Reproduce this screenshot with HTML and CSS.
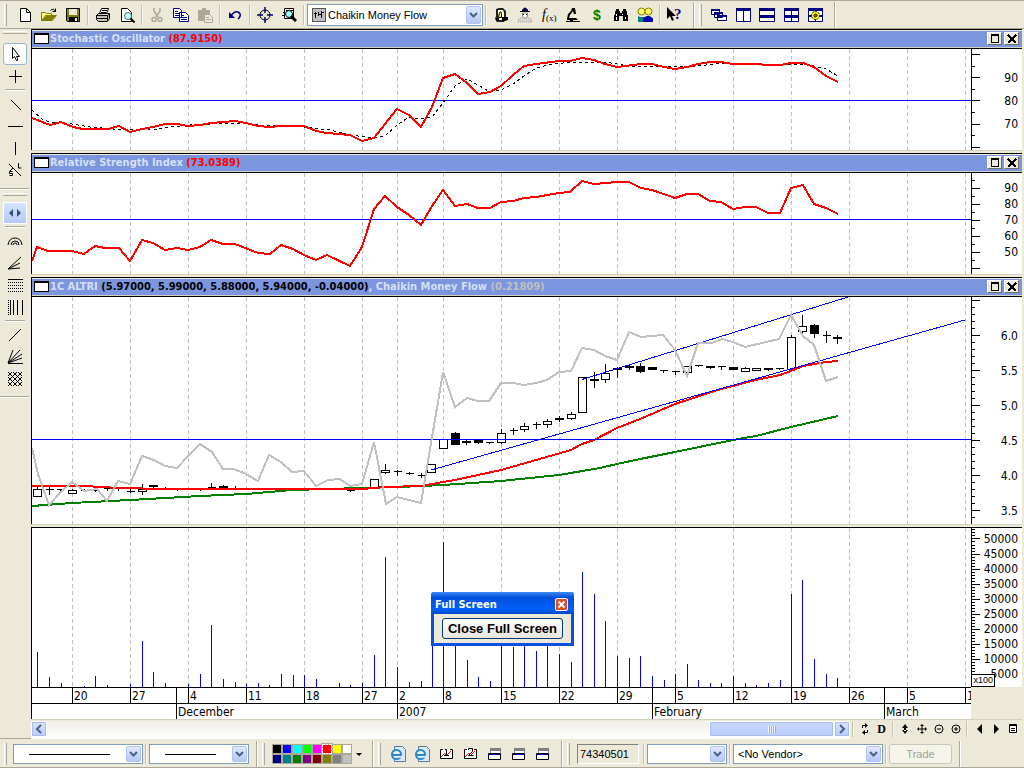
FILE: index.html
```html
<!DOCTYPE html>
<html lang="en">
<head>
<meta charset="utf-8">
<title>1C ALTRI</title>
<link rel="stylesheet" href="styles.css">
</head>
<body>
<header class="toolbar">
  <span class="grip"></span>
  <div class="group group-file">
    <button class="tool" aria-label="New"><svg viewBox="0 0 16 16"><path class="ink fill-white" d="M3.500 1.500h6l4 4v9h-10zM9.500 1.500v4h4"/></svg></button>
    <button class="tool" aria-label="Open"><svg viewBox="0 0 16 16"><path fill="#ffff80" stroke="#808000" d="M.5 13.500v-8h4l1 1h5v2M.500 13.500l4-5h11l-4 5z"/><path fill="#808000" d="M1 13l4-4h10l-4 4z"/><path class="ink" d="M9.500 3.500q3-3 5 1m0-3v3h-3"/></svg></button>
    <button class="tool" aria-label="Save"><svg viewBox="0 0 16 16"><path fill="#808000" stroke="#000" d="M1.500 1.500h13v13h-12l-1-1z"/><path fill="#ece9d8" d="M4 2h8v6H4z"/><path d="M4 10h9v5H4z"/><path fill="#ece9d8" d="M10 11h2v3h-2z"/></svg></button>
  </div>
  <span class="sep"></span>
  <div class="group">
    <button class="tool" aria-label="Print"><svg viewBox="0 0 16 16"><path class="ink fill-white" d="M4.500 6.500l2-5h7l-2 5"/><path class="ink" d="M7 3.500h5M6 5.500h5"/><path fill="#c0c0c0" stroke="#000" d="M1.500 8.500l2-2h11v5l-2 3h-9l-2-2zM1.500 8.500h11l2-2M12.500 8.500v5M2 11.500h10"/><path fill="#ff0" d="M8 12h2v1H8z"/></svg></button>
    <button class="tool" aria-label="Print preview"><svg viewBox="0 0 16 16"><path class="ink fill-white" d="M2.500 14.500v-13h6l4 4v9z"/><circle cx="9" cy="9" r="3.500" fill="#b8ffff" stroke="#606060"/><path stroke="#000" stroke-width="2" d="M11.500 11.500l4 4"/></svg></button>
  </div>
  <span class="sep"></span>
  <div class="group">
    <button class="tool" aria-label="Cut" disabled><svg viewBox="0 0 16 16"><path class="dim" d="M5 1v3l4 6M11 1v3l-4 6"/><circle class="dim" cx="5" cy="12.500" r="2"/><circle class="dim" cx="11" cy="12.500" r="2"/></svg></button>
    <button class="tool" aria-label="Copy"><svg viewBox="0 0 16 16"><path fill="#fff" stroke="#000080" d="M.500 1.500h6l2 2v7h-8zM6.500 5.500h6l3 3v6h-9z"/><path stroke="#000080" d="M2 4.500h3M2 6.500h4M2 8.500h4M8 8.500h3M8 10.500h6M8 12.500h6"/></svg></button>
    <button class="tool" aria-label="Paste" disabled><svg viewBox="0 0 16 16"><path fill="#aca899" d="M1 3h4V1h4v2h4v11H1z"/><path fill="#ece9d8" stroke="#aca899" d="M4 4.500h6M7.500 7.500h5l3 3v5h-8z"/><path stroke="#aca899" d="M9 10.500h3M9 12.500h5"/></svg></button>
  </div>
  <span class="sep"></span>
  <button class="tool" aria-label="Undo"><svg viewBox="0 0 16 16"><path fill="none" stroke="#000080" stroke-width="1.500" d="M4 9q3-5 7-4 4 2 1 6l-1 1"/><path fill="#000080" d="M2 5v6h6z"/></svg></button>
  <span class="sep"></span>
  <button class="tool" aria-label="Crosshair"><svg viewBox="0 0 16 16"><circle cx="8" cy="8" r="5" fill="none" stroke="#000"/><path stroke="#000080" stroke-width="1.500" d="M8 0v6M8 10v6M0 8h6M10 8h6"/></svg></button>
  <button class="tool" aria-label="Explore"><svg viewBox="0 0 16 16"><path class="ink fill-white" d="M3.500 1.500h9v10h-9z"/><path stroke="#000" d="M5 3.500h7M2 5.500h2M1 8.500h3"/><circle cx="8" cy="7" r="3.500" fill="#a0ffff" stroke="#000"/><path stroke="#000" stroke-width="3" d="M10 9l5 5"/></svg></button>
  <span class="sep"></span>
  <div class="combo combo-indicator">
    <svg class="combo-icon" viewBox="0 0 14 14"><path fill="#c0c0c0" stroke="#555" d="M.500.500h13v13H.500z"/><path stroke="#000" d="M3.500 4v6M6.500 4v4M9.500 3v7M2 5.500h3M6 6.500h3M9 4.500h3"/></svg>
    <select aria-label="Indicator"><option>Chaikin Money Flow</option></select>
    <span class="arrow"><svg viewBox="0 0 9 7"><path d="M1 1l3.500 3.500L8 1"/></svg></span>
  </div>
  <span class="sep"></span>
  <div class="group">
    <button class="tool" aria-label="Expert"><svg viewBox="0 0 16 16"><path fill="#222" d="M3 2l3-1h4l3 3v8l-2 3H4l-2-3 1-3z"/><path fill="#fff" d="M5 3h5l1 3v5l-2 2H5z"/><path fill="#ff0" stroke="#000" d="M6.500 5.500q2-2 2 1v4h-3z"/><path d="M3 11h3v3H3zM9 10h6v3l-3 1H9z"/></svg></button>
    <button class="tool" aria-label="Advisor"><svg viewBox="0 0 16 16"><path fill="#0000c0" stroke="#000" d="M5.500 3q2.500-4 5 0v1h-5z"/><path fill="#fff" stroke="#888" d="M5.500 6h5v3l-1.500 2H7L5.500 9z"/><path stroke="#000" d="M3 4.500h10M6 7.500h1M9 7.500h1"/><path fill="#d8d6cc" stroke="#999" stroke-dasharray="1 1" d="M1 15l1-3 4-2 2 2 2-2 4 2 1 3z"/></svg></button>
    <button class="tool" aria-label="Formula"><svg viewBox="0 0 16 16"><text class="glyph glyph-f" x="1" y="12">f</text><text class="glyph glyph-x" x="5" y="14">(x)</text></svg></button>
    <button class="tool" aria-label="System tester"><svg viewBox="0 0 16 16"><path d="M7 1h3l1 6H9L8 4 5 8l-1 3h7l2 2H9v1h6v1H1v-1h4v-1H2v-1l1-5 3-3z"/><path fill="#ff0" d="M8 13h3v1H8z"/></svg></button>
    <button class="tool" aria-label="Optimize"><svg viewBox="0 0 16 16"><text class="glyph glyph-dollar" x="4" y="13">$</text></svg></button>
    <button class="tool" aria-label="Find"><svg viewBox="0 0 16 16"><path d="M3 2h3v2h1v2h2V4h1V2h3v2h1v4h1v6h-5V9H6v5H1V8h1V4h1z"/><path stroke="#fff" d="M3.500 7v2M3.500 10v3M9.500 7v1M12.500 10v2"/></svg></button>
    <button class="tool" aria-label="Community"><svg viewBox="0 0 16 16"><circle cx="4.500" cy="4.500" r="3.500" fill="#ffff60" stroke="#808000"/><circle cx="11.500" cy="4.500" r="3.500" fill="#ffff60" stroke="#808000"/><path fill="#008080" d="M1 9l2 1h4l2 2v3H1z"/><path fill="#0000c0" stroke="#000080" d="M6.500 14.500v-3l3-2h3l3 2v3z"/></svg></button>
  </div>
  <span class="sep"></span>
  <button class="tool" aria-label="Context help"><svg viewBox="0 0 16 16"><path d="M0 0v12l3-3 2 5 2-1-2-4h4z"/><text class="glyph glyph-help" x="7" y="12">?</text></svg></button>
  <span class="edge edge-help"></span><span class="grip"></span>
  <div class="group group-windows">
    <button class="tool" aria-label="Cascade"><svg viewBox="0 0 16 16"><path fill="#fff" stroke="#000080" d="M.500 2.500h8v5h-8zM3.500 5.500h8v5h-8zM6.500 8.500h9v5h-9z"/><path fill="#000080" d="M0 2h9v2H0zM3 5h9v2H3zM6 8h10v2H6z"/></svg></button>
    <button class="tool" aria-label="Tile columns"><svg viewBox="0 0 16 16"><path fill="#fff" stroke="#000080" d="M1.500 1.500h14v13h-14zM8.500 1.500v13"/><path fill="#000080" d="M1 1h15v3H1z"/></svg></button>
    <button class="tool" aria-label="Tile rows"><svg viewBox="0 0 16 16"><path fill="#fff" stroke="#000080" d="M.500 1.500h15v13h-15z"/><path fill="#000080" d="M0 1h16v3H0zM0 8h16v3H0z"/></svg></button>
    <button class="tool" aria-label="Tile grid"><svg viewBox="0 0 16 16"><path fill="#fff" stroke="#000080" d="M1.500 1.500h14v13h-14zM8.500 1.500v13"/><path fill="#000080" d="M1 1h15v3H1zM1 8h15v3H1z"/></svg></button>
    <button class="tool" aria-label="Layout"><svg viewBox="0 0 16 16"><path fill="#fff" stroke="#000080" d="M1.500 1.500h14v13h-14zM8.500 1.500v13"/><path fill="#000080" d="M1 1h15v3H1zM1 8h15v2H1z"/><circle cx="8.500" cy="8.500" r="4" fill="#ff0" stroke="#000" stroke-dasharray="2 1"/><circle cx="8.500" cy="8.500" r="1.500" fill="#808000" stroke="#000"/></svg></button>
  </div>
  <span class="edge"></span>
</header>

<main class="workspace">
  <nav class="side" aria-label="Drawing tools">
    <span class="side-grip"></span>
    <button class="tool side-tool picked" aria-label="Select"><svg viewBox="0 0 16 16"><path class="ink fill-white" d="M5.500 1.500v11l2-2 2 4h1v-2l-1-2h3z"/></svg></button>
    <button class="tool side-tool" aria-label="Cross"><svg viewBox="0 0 16 16"><path class="ink" d="M2 8.500h13M8.500 2v13"/></svg></button>
    <span class="side-sep"></span>
    <button class="tool side-tool" aria-label="Trendline"><svg viewBox="0 0 16 16"><path class="ink" d="M4 4l10 10"/></svg></button>
    <button class="tool side-tool" aria-label="Horizontal line"><svg viewBox="0 0 16 16"><path class="ink" d="M1 8.500h15"/></svg></button>
    <button class="tool side-tool" aria-label="Vertical line"><svg viewBox="0 0 16 16"><path class="ink" d="M8.500 2v13"/></svg></button>
    <button class="tool side-tool" aria-label="Stop loss line"><svg viewBox="0 0 16 16"><path class="ink" d="M2 2l12 12M11.500 1v5h3M6 6L3 9M5.500 9.500h-3v2h3v2h-3"/></svg></button>
    <span class="side-edge side-edge-mid"></span><span class="side-grip"></span>
    <button class="tool side-tool active" aria-label="Pan"><svg viewBox="0 0 16 16"><path fill="#31517b" d="M6 4v8L2 8zM10 4v8l4-4z"/></svg></button>
    <span class="side-sep"></span>
    <button class="tool side-tool" aria-label="Fibonacci arcs"><svg viewBox="0 0 16 16"><path class="ink" d="M1 12q1-7 7-7t7 7M4 12q0-4 4-4t4 4M6 12q0-2 2-2t2 2"/></svg></button>
    <button class="tool side-tool" aria-label="Fibonacci fan"><svg viewBox="0 0 16 16"><path class="ink" d="M1 14L14 2M1 14l12-6M1 14l12-1"/></svg></button>
    <button class="tool side-tool" aria-label="Fibonacci retracement"><svg viewBox="0 0 16 16"><path class="ink" d="M1 2.500h15"/><path class="ink" stroke-dasharray="1 1" d="M1 5.500h15M1 8.500h15M1 11.500h15M1 14.500h15"/></svg></button>
    <button class="tool side-tool" aria-label="Time zones"><svg viewBox="0 0 16 16"><path class="ink" d="M3.500 1v15M6.500 1v15M10.500 1v15M15.500 1v15"/><path class="ink" stroke-dasharray="1 1" d="M1.500 1v15"/></svg></button>
    <span class="side-sep"></span>
    <button class="tool side-tool" aria-label="Line"><svg viewBox="0 0 16 16"><path class="ink" d="M2 14L14 2"/></svg></button>
    <button class="tool side-tool" aria-label="Gann fan"><svg viewBox="0 0 16 16"><path class="ink" d="M1 14.500h15M1 14L6 1M1 14L13 1M1 14l14-9M1 14l14-5"/></svg></button>
    <button class="tool side-tool" aria-label="Gann grid"><svg viewBox="0 0 16 16"><path class="ink" d="M1 1l14 14M6 1l9 9M11 1l4 4M1 6l9 9M1 11l4 4M15 1L1 15M10 1L1 10M5 1L1 5M15 6l-9 9M15 11l-4 4"/></svg></button>
    <span class="side-edge"></span>
  </nav>

  <div class="charts">
    <section class="panel">
      <h2 class="panel-head"><span class="win"></span><span class="title">Stochastic Oscillator <b class="hot">(87.9150)</b></span><button class="box" aria-label="Maximize"><svg viewBox="0 0 10 10"><path d="M1.500 1v7.500h7V1M1 1.500h8M1 .500h8"/></svg></button><button class="box" aria-label="Close"><svg viewBox="0 0 10 10"><path stroke-width="1.500" d="M1 1l8 8M9 1L1 9"/></svg></button></h2>
      <div class="plot">
        <svg class="graph h-small" viewBox="32 49 939 101" preserveAspectRatio="none"><g class="grid"></g>
          <path class="level" d="M32 100.500h939"/>
          <polyline class="dash" points="32,110 42,119 50,122 72,124 90,127 113,129 130,129 150,130 170,127 190,125 235,123 260,125 304,127 330,130 350,135 374,138 385,136 397,125 409,117 421,119 432,117 443,103 455,86 467,79 478,85 490,92 501,90 513,84 524,76 536,68 548,65 570,62 605,62 629,66 675,66 698,66 721,63 756,65 791,64 803,64 814,66 826,69 838,76"/>
          <polyline class="red" points="32,118 50,125 61,122 73,127 83,129 108,129 119,126 130,132 142,129 153,127 165,124 177,124 188,126 200,125 211,123 235,121 246,123 258,126 270,127 281,126 304,126 316,131 327,133 350,135 362,141 374,138 385,124 397,109 409,115 421,127 432,107 443,78 455,74 467,83 478,94 490,92 501,86 513,75 524,66 536,64 559,61 570,61 582,58 594,60 605,64 617,67 641,64 652,64 664,67 675,69 687,67 698,64 710,62 721,62 733,64 756,64 768,65 780,65 791,63 803,63 814,67 826,76 838,82"/>
        </svg>
        <svg class="axis h-small" viewBox="971 49 51 101" data-start="54.500" data-step="11.600" data-major="2" data-labels="90,80,70" data-first="78"></svg>
      </div>
    </section>

    <section class="panel">
      <h2 class="panel-head"><span class="win"></span><span class="title">Relative Strength Index <b class="hot">(73.0389)</b></span><button class="box" aria-label="Maximize"><svg viewBox="0 0 10 10"><path d="M1.500 1v7.500h7V1M1 1.500h8M1 .500h8"/></svg></button><button class="box" aria-label="Close"><svg viewBox="0 0 10 10"><path stroke-width="1.500" d="M1 1l8 8M9 1L1 9"/></svg></button></h2>
      <div class="plot">
        <svg class="graph h-small" viewBox="32 173 939 101" preserveAspectRatio="none"><g class="grid"></g>
          <path class="level" d="M32 219.500h939"/>
          <polyline class="red" points="32,261 37,247 48,251 72,251 84,254 95,246 105,248 119,248 130,261 142,240 153,243 165,250 177,248 188,250 200,247 211,240 223,244 235,244 258,253 270,254 281,245 293,249 304,255 316,260 327,255 350,266 362,247 374,209 385,196 397,207 409,215 421,225 432,206 443,190 455,206 467,204 478,208 490,208 501,202 513,201 524,198 536,197 559,193 570,192 582,181 594,184 617,182 629,182 641,188 652,190 675,198 687,194 698,194 710,201 721,202 733,209 745,207 756,207 768,213 780,213 791,188 803,185 814,204 826,208 838,214"/>
        </svg>
        <svg class="axis h-small" viewBox="971 173 51 101" data-start="180" data-step="8" data-major="2" data-labels="90,80,70,60,50" data-first="188"></svg>
      </div>
    </section>

    <section class="panel">
      <h2 class="panel-head"><span class="win"></span><span class="title">1C ALTRI <b class="dark">(5.97000, 5.99000, 5.88000, 5.94000, -0.04000)</b>, Chaikin Money Flow <b class="pale">(0.21809)</b></span><button class="box" aria-label="Maximize"><svg viewBox="0 0 10 10"><path d="M1.500 1v7.500h7V1M1 1.500h8M1 .500h8"/></svg></button><button class="box" aria-label="Close"><svg viewBox="0 0 10 10"><path stroke-width="1.500" d="M1 1l8 8M9 1L1 9"/></svg></button></h2>
      <div class="plot">
        <svg class="graph h-price" viewBox="32 297 939 227" preserveAspectRatio="none"><g class="grid"></g>
          <g id="candles"></g>
          <polyline class="green" points="32,506 72,503 130,500 200,496 246,494 292,490 362,488 400,487 443,485 501,481 559,475 600,468 617,464 640,459 675,452 733,440 756,436 791,427 838,416"/>
          <polyline class="red" points="32,486 84,486 118,488 165,489 362,489 385,487 421,486 443,482 455,480 501,470 536,460 571,450 582,444 594,440 617,428 640,419 675,404 721,389 756,380 780,375 791,371 803,366 826,362 838,361"/>
          <path class="level" d="M32 439.500h939M431 470L965 320M582 379.500L848 297"/>
          <polyline class="silver" points="32,448 38,474 49,505 61,492 72,482 84,491 97,489 107,501 118,481 130,484 142,456 154,460 165,466 177,468 188,456 200,444 212,452 223,469 234,469 246,474 258,481 269,455 281,462 292,472 304,471 316,486 328,480 340,479 350,486 362,484 374,442 386,504 397,497 409,500 421,503 443,372 455,407 467,398 478,401 489,401 501,383 513,383 524,385 536,383 547,380 559,372 571,371 582,348 594,350 605,356 617,360 629,332 641,337 663,335 675,350 687,376 698,343 712,343 722,339 733,342 745,347 779,339 791,315 803,336 814,345 826,381 838,377"/>
        </svg>
        <svg class="axis h-price" viewBox="971 297 51 227" data-start="300.500" data-step="7" data-major="5" data-labels="6.0,5.5,5.0,4.5,4.0,3.5" data-first="335.500"></svg>
      </div>
    </section>

    <section class="panel panel-volume">
      <div class="plot">
        <svg class="graph h-volume" viewBox="32 528 939 159" preserveAspectRatio="none"><g class="grid"></g><path id="bars" class="level"/></svg>
        <svg class="axis h-volume" viewBox="971 528 51 159" data-start="529.900" data-step="3.020" data-major="5" data-offset="3" data-labels="50000,45000,40000,35000,30000,25000,20000,15000,10000,5000" data-first="538.500"></svg>
        <span class="scale">x100</span>
      </div>
      <div class="dates"><svg id="dates" viewBox="32 687 939 32" preserveAspectRatio="none"></svg></div>
      <div class="dialog" role="dialog" aria-labelledby="dialog-title">
        <div class="dialog-head"><span id="dialog-title">Full Screen</span><button class="dialog-x" aria-label="Close dialog"><svg viewBox="0 0 11 11"><path d="M2.500 2.500l6 6M8.500 2.500l-6 6"/></svg></button></div>
        <div class="dialog-body"><button class="dialog-button">Close Full Screen</button></div>
      </div>
    </section>

    <div class="scroll-row">
      <div class="scrollbar">
        <button class="scroll-button" aria-label="Scroll left"><svg viewBox="0 0 8 10"><path d="M6 1L2 5l4 4"/></svg></button>
        <span class="track"></span>
        <span class="thumb"></span>
        <button class="scroll-button" aria-label="Scroll right"><svg viewBox="0 0 8 10"><path d="M2 1l4 4-4 4"/></svg></button>
      </div>
      <div class="zoom-tools">
        <span class="sep small"></span>
        <button class="mini" aria-label="Refresh"><svg viewBox="0 0 12 12"><path fill="none" stroke="#000" d="M3.500 5V2.500H7M8.500 7v2.500H5"/><path d="M6 0l3 2.500L6 5zM6 7v5L3 9.500z"/></svg></button>
        <button class="mini mini-d">D</button>
        <span class="sep small"></span>
        <button class="mini" aria-label="Fit height"><svg viewBox="0 0 12 12"><path d="M6 1l3 4H3zM6 11l3-4H3zM5 4h2v4H5z"/></svg></button>
        <button class="mini" aria-label="Move"><svg viewBox="0 0 12 12"><path d="M6 1l2 2H4zM6 11l2-2H4zM1 6l2-2v4zM11 6L9 4v4z"/><path stroke="#000" d="M6 2v8M2 6h8"/></svg></button>
        <button class="mini" aria-label="Zoom out"><svg viewBox="0 0 12 12"><circle cx="6" cy="6" r="4" fill="none" stroke="#000"/><path stroke="#000" d="M4 6h4"/></svg></button>
        <button class="mini" aria-label="Zoom in"><svg viewBox="0 0 12 12"><circle cx="6" cy="6" r="4" fill="none" stroke="#000"/><path stroke="#000" d="M4 6h4M6 4v4"/></svg></button>
        <span class="sep small"></span>
        <button class="mini" aria-label="Previous"><svg viewBox="0 0 12 12"><path d="M9 1v10L4 6z"/></svg></button>
        <button class="mini" aria-label="Next"><svg viewBox="0 0 12 12"><path d="M4 1v10l5-5z"/></svg></button>
        <button class="mini" aria-label="Data"><svg viewBox="0 0 12 12"><path fill="#fff" stroke="#000" d="M2.500 1.500h7v8h-7zM2.500 2.500h7M4 5.500h4M4 7.500h4"/></svg></button>
      </div>
    </div>
  </div>
</main>

<footer class="toolbar bottom">
  <span class="grip"></span>
  <div class="combo combo-style"><select aria-label="Line style"><option></option></select><span class="sample"></span><span class="arrow"><svg viewBox="0 0 9 7"><path d="M1 1l3.500 3.500L8 1"/></svg></span></div>
  <span class="sep"></span>
  <div class="combo combo-weight"><select aria-label="Line weight"><option></option></select><span class="sample"></span><span class="arrow"><svg viewBox="0 0 9 7"><path d="M1 1l3.500 3.500L8 1"/></svg></span></div>
  <span class="edge"></span><span class="grip"></span>
  <div class="palette" id="palette"></div>
  <span class="drop"></span>
  <span class="edge"></span><span class="grip"></span>
  <div class="group group-web">
    <button class="tool" aria-label="Web page 1"><svg viewBox="0 0 16 16"><path fill="#dbe9f8" stroke="#5878a8" d="M4.500.500h8l3 3v12h-11z"/><circle cx="6.500" cy="8.500" r="4.500" fill="#e8f6ff" stroke="#2888d0" stroke-width="2"/><path stroke="#2888d0" stroke-width="2" d="M2 9h9"/><path stroke="#e8f6ff" stroke-width="1.500" d="M8 10.800h4"/></svg></button>
    <button class="tool" aria-label="Web page 2"><svg viewBox="0 0 16 16"><path fill="#dbe9f8" stroke="#5878a8" d="M4.500.500h8l3 3v12h-11z"/><circle cx="6.500" cy="8.500" r="4.500" fill="#e8f6ff" stroke="#2888d0" stroke-width="2"/><path stroke="#2888d0" stroke-width="2" d="M2 9h9"/><path stroke="#e8f6ff" stroke-width="1.500" d="M8 10.800h4"/></svg></button>
    <button class="tool" aria-label="Chart 1"><svg viewBox="0 0 16 16"><path class="ink fill-white" d="M5 3.500H2.500v9h12v-9H12"/><path fill="none" stroke="red" d="M3 11l4-4 1 3 5-5"/><path class="ink" d="M7 3.500h1.500v6M6 9.500h5"/></svg></button>
    <button class="tool" aria-label="Chart 2"><svg viewBox="0 0 16 16"><path class="ink fill-white" d="M5 3.500H2.500v9h12v-9H12"/><path fill="none" stroke="red" d="M3 11l4-4 1 3 5-5"/><path class="ink" d="M6.500 4v-1.500h4v3l-4 4h5"/></svg></button>
    <button class="tool" aria-label="Window 1"><svg viewBox="0 0 16 16"><path fill="#fff" stroke="#808080" d="M4.500 2.500h10v5h-10z"/><path fill="#808080" d="M4 2h11v3H4z"/><path class="ink fill-white" d="M2.500 7.500h12v6h-12z"/><path fill="#0000c0" d="M3 8h11v1H3z"/></svg></button>
    <button class="tool" aria-label="Window 2"><svg viewBox="0 0 16 16"><path fill="#fff" stroke="#808080" d="M4.500 2.500h10v5h-10z"/><path fill="#808080" d="M4 2h11v3H4z"/><path class="ink fill-white" d="M2.500 7.500h12v6h-12z"/><path fill="#0000c0" d="M3 8h11v1H3z"/></svg></button>
    <button class="tool" aria-label="Window 3"><svg viewBox="0 0 16 16"><path fill="#fff" stroke="#808080" d="M4.500 2.500h10v5h-10z"/><path fill="#808080" d="M4 2h11v3H4z"/><path class="ink fill-white" d="M2.500 7.500h12v6h-12z"/><path fill="#0000c0" d="M3 8h11v1H3z"/></svg></button>
  </div>
  <span class="edge"></span><span class="grip"></span>
  <input class="account" aria-label="Account" value="74340501" readonly>
  <span class="sep"></span>
  <div class="combo combo-empty"><select aria-label="Symbol"><option></option></select><span class="arrow"><svg viewBox="0 0 9 7"><path d="M1 1l3.500 3.500L8 1"/></svg></span></div>
  <span class="sep"></span>
  <div class="combo combo-vendor"><select aria-label="Vendor"><option>&lt;No Vendor&gt;</option></select><span class="arrow"><svg viewBox="0 0 9 7"><path d="M1 1l3.500 3.500L8 1"/></svg></span></div>
  <span class="sep"></span>
  <button class="trade" disabled>Trade</button>
  <span class="edge"></span>
</footer>
<script src="script.js"></script>
</body>
</html>
```
FILE: styles.css
```css
* { box-sizing: border-box; }
body { margin: 0; min-height: 100vh; display: flex; flex-direction: column; background: #ece9d8; color: #000; font: 11px "DejaVu Sans Condensed", "Noto Sans", sans-serif; overflow-x: hidden; }
button, select, input { font: inherit; color: inherit; margin: 0; padding: 0; border: 0; background: none; }
svg { display: block; shape-rendering: crispEdges; }

.toolbar { display: flex; align-items: center; height: 29px; padding: 1px 0 0 4px; border-top: 1px solid #aca899; border-bottom: 1px solid #aca899; flex: none; }
.grip { width: 3px; height: 22px; border-left: 1px solid #fff; border-right: 1px solid #aca899; flex: none; }
.sep { width: 2px; height: 20px; margin: 0 2px; border-left: 1px solid #c5c2b2; border-right: 1px solid #f6f4ec; flex: none; }
.edge { width: 2px; align-self: stretch; margin-right: 4px; border-left: 1px solid #aca899; border-right: 1px solid #fff; flex: none; }
.edge-help { margin-left: 6px; }
.group { display: flex; }
.group-file { margin-left: 6px; }
.tool { width: 24px; height: 22px; display: flex; align-items: center; justify-content: center; flex: none; }
.tool svg { width: 16px; height: 16px; shape-rendering: auto; }
.ink { fill: none; stroke: #000; }
.fill-white { fill: #fff; }
.dim { fill: none; stroke: #aca899; stroke-width: 1.500; }
.glyph { font-family: "Liberation Serif", serif; }
.glyph-f { font-size: 14px; font-style: italic; }
.glyph-x { font-size: 9px; }
.glyph-dollar { font: bold 14px "Liberation Sans", sans-serif; fill: #008000; }
.glyph-help { font: bold 15px "Liberation Serif", serif; fill: #000080; }
.group-windows { margin-left: 5px; margin-right: 7px; }

.combo { position: relative; display: flex; align-items: center; height: 20px; border: 1px solid #7f9db9; background: #fff; flex: none; }
.combo select { flex: 1; min-width: 0; height: 18px; padding: 0 20px 0 4px; appearance: none; font: 11px "Liberation Sans", sans-serif; }
.combo .arrow { position: absolute; right: 1px; top: 1px; width: 15px; height: 16px; display: grid; place-items: center; border: 1px solid #b0c4f4; border-radius: 2px; background: linear-gradient(#dfe8fe, #b4c8f8); pointer-events: none; }
.arrow svg { width: 9px; height: 7px; fill: none; stroke: #4d6185; stroke-width: 2; shape-rendering: auto; }
.combo-indicator { width: 176px; height: 22px; }
.combo-indicator .arrow { height: 18px; }
.combo-icon { width: 14px; height: 14px; margin-left: 4px; flex: none; }
.combo-indicator select { font-size: 12px; padding-left: 2px; font-family: "Liberation Sans", sans-serif; font-size: 11px; }
.sample { position: absolute; left: 15px; right: 32px; top: 9px; height: 1px; background: #000; pointer-events: none; }

.workspace { display: flex; flex: none; }
.side { width: 31px; flex: none; display: flex; flex-direction: column; align-items: center; padding: 2px 2px 0 0; border-bottom: 1px solid #aca899; }
.side-grip { width: 24px; height: 3px; margin-bottom: 9px; border-top: 1px solid #fff; border-bottom: 1px solid #aca899; }
.side-sep { width: 20px; height: 2px; margin: 2px 0; border-top: 1px solid #aca899; border-bottom: 1px solid #fff; }
.side-edge { align-self: stretch; height: 2px; margin: 6px 0 3px; border-top: 1px solid #aca899; border-bottom: 1px solid #fff; }
.side-edge-mid { margin-top: 7px; }
.side-tool { height: 22px; }
.picked { border: 1px solid #98b5d2; border-radius: 3px; background: #fff; }
.active { border: 1px solid #fff; background: linear-gradient(#d7e3ff, #b4c8f8); }
.side-edge + .side-grip { margin-bottom: 6px; }

.charts { flex: 1; min-width: 0; display: flex; flex-direction: column; }
.panel { margin: 0 2px 3px 0; border-left: 1px solid #000; background: #fff; position: relative; box-shadow: 0 1px 0 #d4d0c0; }
.panel-head { display: flex; align-items: center; height: 20px; margin: 0; padding: 0 3px 1px 2px; border-top: 1px solid #000; border-bottom: 1px solid #000; background: #7b96df; box-shadow: inset 0 1px 0 #ece9d8, inset 0 -1px 0 #d4d0c0; font-size: 11px; font-weight: bold; color: #d6dff5; }
.win { width: 15px; height: 11px; margin-right: 1px; border: 1px solid #000; border-top-width: 2px; background: #fff; flex: none; }
.title { flex: 1; min-width: 0; white-space: nowrap; overflow: hidden; line-height: 16px; }
.hot { color: #f00; }
.dark { color: #000; }
.pale { color: #c0c0c0; }
.box { width: 15px; height: 13px; margin-left: 2px; display: grid; place-items: center; background: #ece9d8; border: 1px solid #fff; border-right-color: #716f64; border-bottom-color: #716f64; }
.box svg { width: 10px; height: 10px; fill: none; stroke: #000; }
.plot { display: flex; position: relative; }
.graph { flex: 1; min-width: 0; width: 100%; }
.axis { width: 51px; flex: none; }
.h-small { height: 101px; }
.h-price { height: 227px; }
.h-volume { height: 159px; }
.graph path, .graph polyline { fill: none; vector-effect: non-scaling-stroke; }
.grid path { stroke: #c0c0c0; stroke-dasharray: 4 3; }
.level { stroke: #00f; }
.red { stroke: #f00; stroke-width: 2; }
.green { stroke: #008000; stroke-width: 2; }
.silver { stroke: #c0c0c0; stroke-width: 2; }
.dash { stroke: #000; stroke-dasharray: 3 3; }
.axis path, #dates path { stroke: #000; fill: none; }
.axis text, #dates text { font: 12px "DejaVu Sans Condensed", "Noto Sans", sans-serif; }
.axis text { text-anchor: end; }
#candles path { stroke: #000; }
#candles .up { fill: #fff; }
#candles .down { fill: #000; }

.panel-volume { margin-bottom: 2px; border-top: 1px solid #000; }
.scale { position: absolute; right: 27px; bottom: 0; height: 13px; padding: 0 1px; border: 1px solid #000; background: #fff; font: 9px/11px "Liberation Sans", sans-serif; }
.dates { display: flex; padding-right: 51px; background: linear-gradient(#ece9d8, #ece9d8) right / 51px 100% no-repeat; }
#dates { flex: 1; min-width: 0; width: 100%; height: 32px; }
.dialog { position: absolute; left: 399px; top: 64px; width: 143px; padding: 0 3px 3px; background: #0a50e0; border-radius: 3px 3px 0 0; }
.dialog-head { display: flex; align-items: center; justify-content: space-between; height: 22px; margin: 0 -3px; padding: 3px 6px 0 4px; border-radius: 3px 3px 0 0; background: linear-gradient(#3c8cf8, #0050dc 25%, #0060f8 80%, #0048c8); color: #fff; font-weight: bold; }
.dialog-x { width: 13px; height: 13px; border: 1px solid #fff; border-radius: 2px; background: #dc4c28; }
.dialog-x svg { width: 11px; height: 11px; stroke: #fff; stroke-width: 2; shape-rendering: auto; }
.dialog-body { height: 29px; padding: 4px 8px; background: #ece9d8; }
.dialog-button { width: 100%; height: 21px; border: 1px solid #003c74; border-radius: 3px; background: linear-gradient(#fff, #e8e6dc); font: bold 13px "Liberation Sans", sans-serif; white-space: nowrap; }

.scroll-row { display: flex; height: 18px; }
.scrollbar { flex: 1; display: flex; background: linear-gradient(#f0efe8, #fefefc); }
.scroll-button, .thumb { width: 16px; height: 16px; display: grid; place-items: center; border: 1px solid #fff; outline: 1px solid #a8bce8; outline-offset: -2px; border-radius: 2px; background: linear-gradient(#d7e3ff, #b8ccfa); flex: none; }
.scroll-button svg { width: 8px; height: 10px; fill: none; stroke: #4d6185; stroke-width: 2; shape-rendering: auto; }
.track { flex: 664 1 0; }
.thumb { flex: 123 1 0; background: repeating-linear-gradient(90deg, #eef4fe 0 1px, #8cb0f8 1px 2px) center / 8px 7px no-repeat, linear-gradient(#cad8fd, #b8ccfa); }
.zoom-tools { width: 174px; flex: none; display: flex; align-items: flex-start; }
.sep.small { height: 16px; }
.mini { width: 17px; height: 16px; display: grid; place-items: center; }
.mini svg { width: 12px; height: 12px; shape-rendering: auto; }
.mini-d { font: bold 12px "Liberation Serif", serif; }

.bottom { border-top: 0; padding-top: 2px; }
.combo-style { width: 130px; margin-left: 6px; }
.combo-weight { width: 100px; }
.bottom .edge { margin-left: 7px; }
.palette { display: grid; grid-template-columns: repeat(8, 10px); grid-auto-rows: 10px; margin-left: 7px; }
.swatch { width: 10px; height: 10px; border: 1px solid #aca899; }
.swatch.on { border: 1px dashed #fff; outline: 1px solid #aca899; }
.drop { margin: 0 3px 0 4px; border: 3px solid transparent; border-top-color: #000; border-bottom: 0; }
.group-web { margin-left: 5px; }
.account { width: 62px; height: 20px; margin: 0 2px 0 7px; padding-left: 2px; border: 1px solid #808080; border-right-color: #fff; border-bottom-color: #fff; background: #ece9d8; font: 11px "Liberation Sans", sans-serif; }
.combo-empty { width: 80px; }
.combo-vendor { width: 150px; }
.trade { width: 63px; height: 20px; border: 1px solid #c9c7ba; border-radius: 3px; background: #f5f4ea; color: #a1a192; font: 11px "Liberation Sans", sans-serif; }
```
FILE: script.js
```js
const NS = "http://www.w3.org/2000/svg";
function add(parent, tag, attrs, text) {
  const node = document.createElementNS(NS, tag);
  for (const key in attrs) node.setAttribute(key, attrs[key]);
  if (text) node.textContent = text;
  parent.appendChild(node);
  return node;
}

const weeks = [[72, "20"], [130, "27"], [188, "4"], [246, "11"], [304, "18"], [362, "27"], [397, "2"], [443, "8"], [501, "15"], [559, "22"], [617, "29"], [675, "5"], [733, "12"], [791, "19"], [849, "26"], [907, "5"], [965, "1"]];
const months = [[176, "December"], [397, "2007"], [652, "February"], [884, "March"]];

document.querySelectorAll(".grid").forEach(g => {
  const box = g.parentNode.viewBox.baseVal;
  weeks.forEach(([x]) => add(g, "path", { d: `M${x + 0.5} ${box.y}v${box.height}` }));
});

document.querySelectorAll(".axis").forEach(svg => {
  const box = svg.viewBox.baseVal, o = svg.dataset;
  const start = +o.start, step = +o.step, major = +o.major, offset = +(o.offset || 0);
  let d = `M971.5 ${box.y}v${box.height}`;
  const isSmall = major === 2;
  for (let i = 0; start + i * step < box.y + box.height; i++) {
    const isMajor = isSmall ? i % 2 === (o.first === "188" ? 1 : 0) : (i - offset) % major === 0;
    d += `M972 ${Math.floor(start + i * step) + 0.5}h${isMajor ? 8 : 3}`;
  }
  add(svg, "path", { d });
  o.labels.split(",").forEach((label, i) => {
    add(svg, "text", { x: 1018, y: Math.round(+o.first + i * step * major + 4) }, label);
  });
});

/* x, high, body top, body bottom, low, direction */
const candles = [
  [37,487,489,496,496,1],[49,485,489,489,494,0],[60,489,489,489,490,0],[72,489,490,493,493,1],[84,489,490,490,490,0],[95,490,490,490,491,0],[107,487,488,488,490,0],[118,487,488,488,490,0],
  [130,488,491,491,492,0],[142,484,489,491,494,1],[153,485,485,486,487,0],[165,487,488,488,489,0],[177,488,488,488,490,0],[200,488,488,488,490,0],[211,483,487,487,489,0],[223,485,486,487,488,0],[235,486,488,488,489,0],
  [281,488,488,488,489,0],[304,488,488,488,490,0],[350,489,490,490,491,0],[374,479,479,488,488,1],[385,464,470,472,473,1],[397,470,471,471,475,0],[409,472,473,473,474,0],[421,473,475,475,477,0],[431,464,464,472,472,1],
  [443,439,439,448,448,1],[455,432,433,444,444,0],[466,440,441,442,444,0],[478,440,440,442,443,0],[489,442,442,442,443,0],[501,429,433,442,443,1],[513,428,430,430,434,0],[524,423,426,429,431,1],[536,422,424,424,428,0],[547,419,421,424,427,1],
  [559,416,418,419,421,0],[571,412,414,418,419,1],[582,377,377,412,412,1],[594,372,379,380,387,0],[605,364,373,379,382,1],[617,367,368,369,377,0],[629,365,366,367,369,0],[640,363,366,371,372,0],[652,367,367,369,369,0],[663,370,370,370,372,0],
  [675,371,371,371,374,0],[687,366,366,372,372,1],[698,365,365,365,366,0],[710,366,366,367,368,0],[721,366,366,366,369,0],[733,367,367,369,369,0],[745,367,368,371,371,1],[756,368,368,370,370,1],[768,368,368,369,370,0],[779,368,368,368,369,0],
  [791,335,337,369,371,1],[802,315,326,331,334,1],[814,324,325,333,337,0],[826,331,335,335,342,0],[837,335,337,338,343,0]
];
const candleLayer = document.getElementById("candles");
candles.forEach(([x, high, top, bottom, low, up]) => {
  const c = x + 0.5;
  add(candleLayer, "path", { d: `M${c} ${high}V${low + 1}` });
  add(candleLayer, "path", { class: up ? "up" : "down", d: `M${c - 4} ${top + 0.5}h8v${bottom - top}h-8z` });
});

/* x, bar top */
const volume = [[37,652],[49,677],[61,683],[84,686],[95,676],[107,685],[130,684],[142,641],[153,672],[165,683],[188,684],[200,674],[211,625],[223,679],[235,682],[246,684],[258,683],[269,685],[281,674],[293,675],[304,675],[316,679],[339,683],[350,685],[362,683],[374,655],[385,557],[397,667],[409,682],[421,681],[432,599],[443,542],[455,620],[467,660],[478,677],[490,681],[501,620],[513,647],[524,630],[536,651],[547,630],[559,654],[571,662],[582,572],[594,594],[605,621],[617,656],[629,658],[640,656],[652,676],[664,680],[675,674],[687,664],[698,680],[710,683],[721,683],[733,676],[745,683],[756,685],[768,683],[780,680],[791,594],[802,580],[814,659],[826,674],[837,678]];
document.getElementById("bars").setAttribute("d", volume.map(([x, y]) => `M${x + 0.5} ${y}V687`).join(""));

const dates = document.getElementById("dates");
add(dates, "rect", { x: 32, y: 687, width: 939, height: 32, fill: "#fff" });
add(dates, "path", { d: "M32 687.5h939M32 703.5h939" + weeks.map(([x]) => `M${x + 0.5} 688v15`).join("") + months.map(([x]) => `M${x + 0.5} 688v31`).join("") });
weeks.forEach(([x, label]) => add(dates, "text", { x: x + 2, y: 700 }, label));
months.forEach(([x, label]) => add(dates, "text", { x: x + 2, y: 716 }, label));

const colors = ["#000", "#00f", "#0ff", "#0f0", "#f0f", "#f00", "#ff0", "#fff", "#000080", "#008080", "#008000", "#800080", "#800000", "#808000", "#808080", "#c0c0c0"];
const palette = document.getElementById("palette");
colors.forEach((color, i) => {
  const swatch = document.createElement("button");
  swatch.className = i === 5 ? "swatch on" : "swatch";
  swatch.style.backgroundColor = color;
  swatch.setAttribute("aria-label", color);
  palette.appendChild(swatch);
});
```
